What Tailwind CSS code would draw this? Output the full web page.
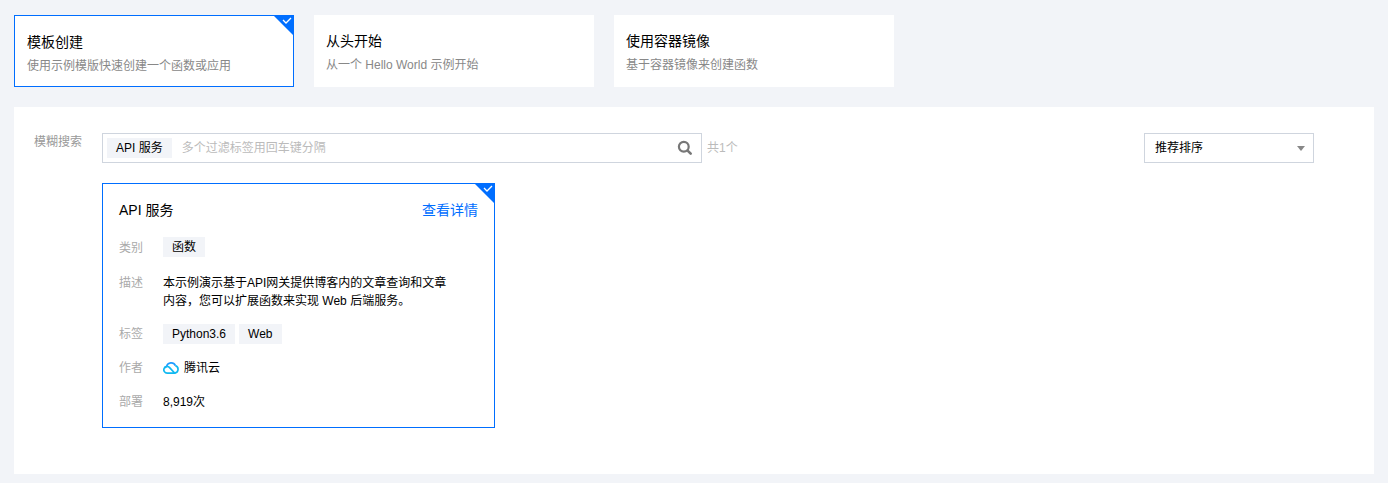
<!DOCTYPE html>
<html lang="zh-CN">
<head>
    <meta charset="UTF-8">
    <title>新建函数</title>
    <script src="https://cdn.jsdelivr.net/npm/@tailwindcss/browser@4"></script>
</head>
<body class="bg-[#f2f4f8] h-[483px] overflow-hidden font-['Liberation_Sans','Noto_Sans_CJK_SC',sans-serif] text-xs text-black">
    <div class="pt-[15px] px-[14px]">
        <!-- Create type tabs -->
        <div class="flex gap-5">
            <div class="relative w-[280px] h-[72px] bg-white border border-[#006eff] pl-3 pt-4">
                <div class="text-sm leading-5">模板创建</div>
                <div class="mt-1 leading-5 text-[#888]">使用示例模版快速创建一个函数或应用</div>
                <svg class="absolute -top-px -right-px w-[21px] h-[21px]" viewBox="0 0 21 21">
                    <path d="M0 0h21v21z" fill="#006eff"/>
                    <path d="M10 5l3 3 5-5" fill="none" stroke="#fff" stroke-width="1.3"/>
                </svg>
            </div>
            <div class="w-[280px] h-[72px] bg-white pl-3 pt-4">
                <div class="text-sm leading-5">从头开始</div>
                <div class="mt-1 leading-5 text-[#888]">从一个 Hello World 示例开始</div>
            </div>
            <div class="w-[280px] h-[72px] bg-white pl-3 pt-4">
                <div class="text-sm leading-5">使用容器镜像</div>
                <div class="mt-1 leading-5 text-[#888]">基于容器镜像来创建函数</div>
            </div>
        </div>

        <!-- Template panel -->
        <div class="mt-5 h-[367px] bg-white pt-[26px] pl-5 pr-[60px]">
            <div class="flex">
                <div class="w-[68px] pt-px leading-4 text-[#999]">模糊搜索</div>
                <div class="flex-1">
                    <div class="flex items-start">
                        <div class="flex items-center w-[600px] h-[30px] border border-[#cfd5de] pl-1">
                            <span class="bg-[#f2f4f8] h-5 px-[9px] leading-5">API 服务</span>
                            <span class="ml-2.5 flex-1 text-[#bbb]">多个过滤标签用回车键分隔</span>
                            <svg class="w-4 h-4 mr-2" viewBox="0 0 16 16" fill="none" stroke="#777">
                                <circle cx="6.8" cy="6.8" r="4.9" stroke-width="2.2"/>
                                <path d="M10.6 10.6l3.1 3.1" stroke-width="2.6" stroke-linecap="round"/>
                            </svg>
                        </div>
                        <span class="ml-[5px] leading-[30px] text-[#bbb]">共1个</span>
                        <div class="ml-auto flex items-center justify-between w-[170px] h-[30px] border border-[#cfd5de] pl-2.5 pr-2">
                            <span>推荐排序</span>
                            <span class="w-0 h-0 border-x-4 border-x-transparent border-t-[5px] border-t-[#888]"></span>
                        </div>
                    </div>

                    <!-- Template card -->
                    <div class="relative mt-5 w-[393px] h-[245px] border border-[#006eff] px-4 pt-4">
                        <svg class="absolute -top-px -right-px w-[21px] h-[21px]" viewBox="0 0 21 21">
                            <path d="M0 0h21v21z" fill="#006eff"/>
                            <path d="M10 5l3 3 5-5" fill="none" stroke="#fff" stroke-width="1.3"/>
                        </svg>
                        <div class="flex justify-between items-center h-5">
                            <span class="text-sm">API 服务</span>
                            <span class="text-sm text-[#006eff]">查看详情</span>
                        </div>
                        <div class="flex mt-[17px] items-center">
                            <span class="w-11 pt-0.5 text-[#aaa]">类别</span>
                            <span class="bg-[#f2f4f8] h-5 px-[9px] leading-5">函数</span>
                        </div>
                        <div class="flex mt-[17px]">
                            <span class="w-11 shrink-0 leading-[18px] text-[#aaa]">描述</span>
                            <p class="w-[290px] leading-[18px]">本示例演示基于API网关提供博客内的文章查询和文章内容，您可以扩展函数来实现 Web 后端服务。</p>
                        </div>
                        <div class="flex mt-3.5 items-center">
                            <span class="w-11 text-[#aaa]">标签</span>
                            <span class="bg-[#f2f4f8] h-5 px-[9px] leading-5">Python3.6</span>
                            <span class="ml-1 bg-[#f2f4f8] h-5 px-[9px] leading-5">Web</span>
                        </div>
                        <div class="flex mt-3.5 items-center h-5">
                            <span class="w-11 text-[#aaa]">作者</span>
                            <svg class="w-4 h-[13px] -mt-0.5" viewBox="0 0 16 13" fill="none" stroke-width="1.7">
                                <path d="M1.4 7A3.2 3.2 0 0 1 3.6 5.4 4.7 4.7 0 0 1 12.4 4.6" stroke="#1e9bff"/>
                                <path d="M12.4 4.6A3.9 3.9 0 0 1 12 12.1H4.2A3.3 3.3 0 1 1 6.6 6.6L11.6 12" stroke="#10b8f0"/>
                            </svg>
                            <span class="ml-[5px]">腾讯云</span>
                        </div>
                        <div class="flex mt-3.5 items-center h-5">
                            <span class="w-11 text-[#aaa]">部署</span>
                            <span>8,919次</span>
                        </div>
                    </div>
                </div>
            </div>
        </div>
    </div>
</body>
</html>
